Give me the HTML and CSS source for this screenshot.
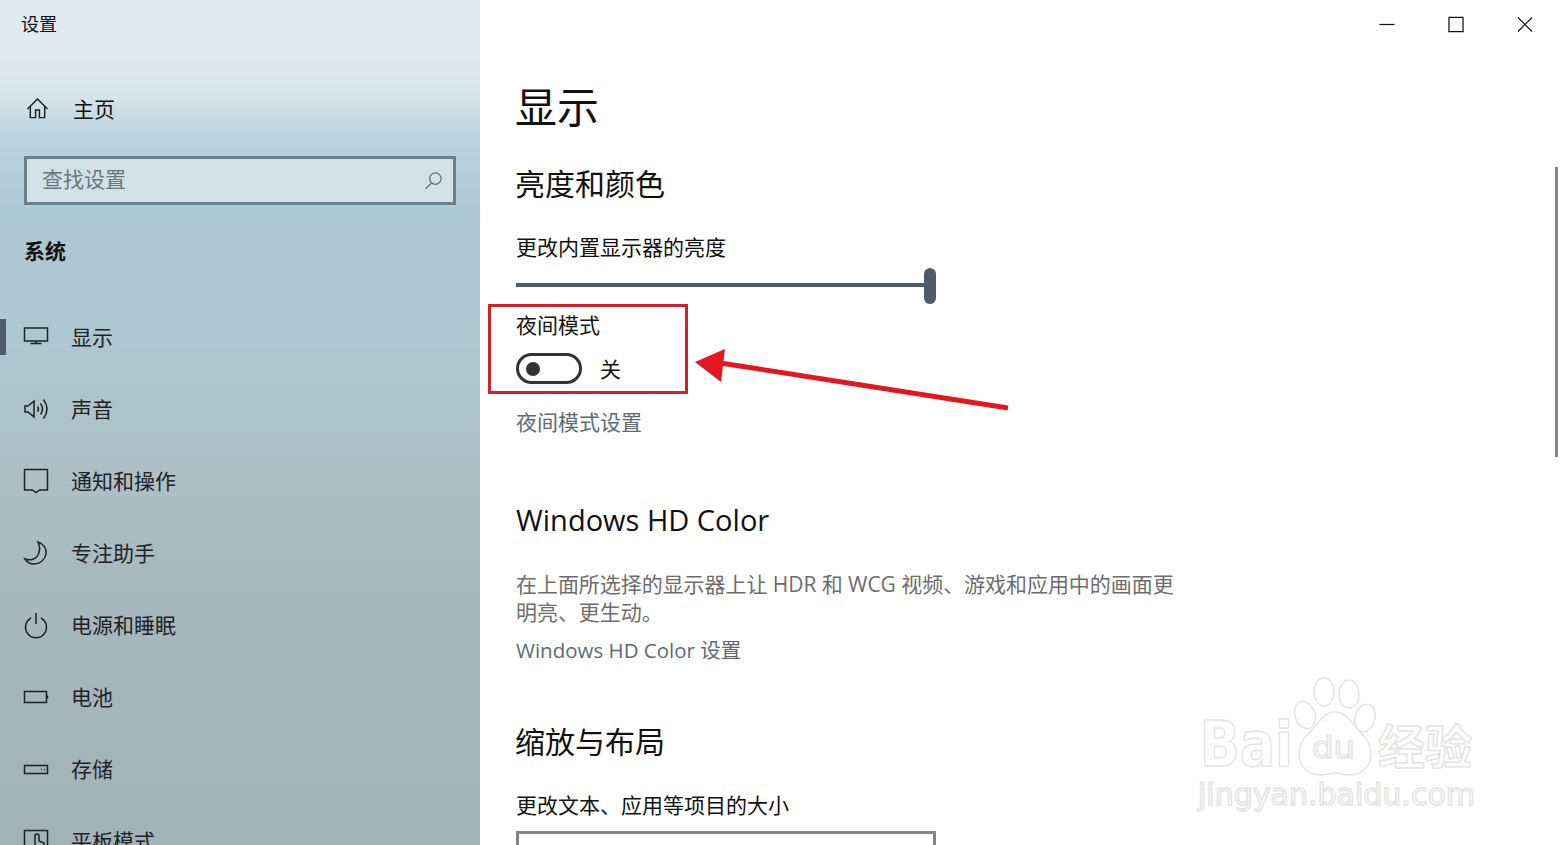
FILE: index.html
```html
<!DOCTYPE html>
<html lang="zh-CN">
<head>
    <meta charset="UTF-8">
    <title>设置</title>
    <link rel="stylesheet" href="styles.css">
</head>
<body>
    <div class="window">
        <aside class="sidebar">
            <div class="app-title">设置</div>
            <div class="home-row">
                <svg class="icon" viewBox="0 0 24 24"><path d="M1.500 12.500 12 2l10.500 10.500M4.500 10v11.500h5.500v-8h4v8h5.500V10"/></svg>
                <span>主页</span>
            </div>
            <div class="search-box">
                <span>查找设置</span>
                <svg class="search-icon" viewBox="0 0 20 20"><circle cx="12" cy="8" r="6"/><path d="M8 12.500 1.500 19"/></svg>
            </div>
            <div class="group-title">系统</div>
            <nav class="nav">
                <div class="nav-item active">
                    <svg class="icon" viewBox="0 0 24 24"><path d="M.5 3h23v13H.5zM12 16v2.500M6.500 18.500h11"/></svg>
                    <span>显示</span>
                </div>
                <div class="nav-item">
                    <svg class="icon" viewBox="0 0 24 24"><path d="M1 9v6h3l6 5V4L4 9zM13.500 9.500q2 2.500 0 5M16.500 6.500q4 5.500 0 11M19.500 2.500q7 9.500 0 19"/></svg>
                    <span>声音</span>
                </div>
                <div class="nav-item">
                    <svg class="icon" viewBox="0 0 24 24"><path d="M.5 .5h23v20.500h-8L12 23.500 8.500 21h-8z"/></svg>
                    <span>通知和操作</span>
                </div>
                <div class="nav-item">
                    <svg class="icon" viewBox="0 0 24 24"><path d="M14 1c6 2 9 7 8 12-1 6-6 10-12 10-4 0-7-2-9-5 6 2 11 0 13-4 2-4 2-9 0-13z"/></svg>
                    <span>专注助手</span>
                </div>
                <div class="nav-item">
                    <svg class="icon" viewBox="0 0 24 24"><path d="M7 5a10.500 10.500 0 1 0 10 0M12 0v11"/></svg>
                    <span>电源和睡眠</span>
                </div>
                <div class="nav-item">
                    <svg class="icon" viewBox="0 0 24 24"><path d="M.5 6.500h22v11H.5zM23.500 10.500v3"/></svg>
                    <span>电池</span>
                </div>
                <div class="nav-item">
                    <svg class="icon" viewBox="0 0 24 24"><path d="M.5 8.500h23v8H.5zM17 12.500h1M20 12.500h1"/></svg>
                    <span>存储</span>
                </div>
                <div class="nav-item">
                    <svg class="icon" viewBox="0 0 24 24"><path d="M.5 23V1.500h23V23M8 23v-6l3 2V7q0-2 2-2t2 2v5l5 2v9"/></svg>
                    <span>平板模式</span>
                </div>
            </nav>
        </aside>

        <main class="content">
            <div class="window-controls">
                <svg viewBox="0 0 16 16"><path d="M0 8h16"/></svg>
                <svg viewBox="0 0 16 16"><path d="M.5.500h15v15H.5z"/></svg>
                <svg viewBox="0 0 16 16"><path d="m.5.500 15 15M15.500.500l-15 15"/></svg>
            </div>

            <h1 class="page-title">显示</h1>
            <h2 class="section-title first">亮度和颜色</h2>
            <div class="label brightness-label">更改内置显示器的亮度</div>
            <div class="slider"><div class="slider-track"></div><div class="slider-thumb"></div></div>
            <div class="label night-label">夜间模式</div>
            <div class="toggle-row">
                <div class="toggle"><div class="toggle-dot"></div></div>
                <span>关</span>
            </div>
            <div class="link night-link">夜间模式设置</div>

            <h2 class="section-title hd-title">Windows HD Color</h2>
            <p class="desc">在上面所选择的显示器上让 HDR 和 WCG 视频、游戏和应用中的画面更明亮、更生动。</p>
            <div class="link hd-link">Windows HD Color 设置</div>

            <h2 class="section-title scale-title">缩放与布局</h2>
            <div class="label scale-label">更改文本、应用等项目的大小</div>
            <div class="select-box"></div>
        </main>

        <div class="scrollbar"></div>
        <div class="mark-box"></div>
        <svg class="mark-arrow" viewBox="0 0 340 70">
            <path class="arrow-line" d="M24 17 318 63"/>
            <path class="arrow-head" d="M5 17 35 4 31 37z"/>
        </svg>
        <svg class="watermark" viewBox="0 0 300 150">
            <ellipse cx="115" cy="45" rx="10" ry="14" transform="rotate(-20 115 45)"/>
            <ellipse cx="134" cy="22" rx="10" ry="14"/>
            <ellipse cx="159" cy="24" rx="10" ry="14"/>
            <ellipse cx="175" cy="48" rx="10" ry="14" transform="rotate(15 175 48)"/>
            <path d="M145 42c-12 0-17 12-25 20-6 6-11 12-11 22 0 13 10 21 22 21 6 0 9-2 14-2s8 2 14 2c12 0 22-8 22-21 0-10-5-16-11-22-8-8-13-20-25-20z"/>
            <text class="wm-bold" x="10" y="96" font-size="62" textLength="93" lengthAdjust="spacingAndGlyphs">Bai</text>
            <text x="122" y="88" font-size="30" textLength="43" lengthAdjust="spacingAndGlyphs">du</text>
            <text class="wm-cjk" x="188" y="94" font-size="47">经验</text>
            <text x="8" y="135" font-size="30" textLength="277" lengthAdjust="spacingAndGlyphs">jingyan.baidu.com</text>
        </svg>
    </div>
</body>
</html>
```

FILE: styles.css
```css
html, body {
    margin: 0;
    height: 100%;
    overflow: hidden;
}
body {
    font-family: "Noto Sans CJK SC", "Open Sans", sans-serif;
    background: white;
    color: #111;
}
.window {
    position: relative;
    display: flex;
    height: 845px;
    overflow: hidden;
}

/* sidebar */
.sidebar {
    width: 480px;
    flex: none;
    overflow: hidden;
    background: linear-gradient(180deg, #e0ebf1 0, #dfeaf0 60px, #d6e4ea 95px, #bdd4de 135px, #adc9d3 210px, #adc8d1 320px, #aebfc6 470px, #a6b8bd 600px, #a2b3b8 845px);
}
.app-title {
    height: 48px;
    padding-left: 21px;
    font-size: 18px;
    line-height: 46px;
}
.home-row {
    display: flex;
    align-items: center;
    gap: 24px;
    height: 42px;
    margin-top: 39px;
    padding-left: 26px;
    font-size: 21px;
}
.home-row .icon {
    width: 23px;
    height: 23px;
    margin-top: 0;
}
.icon {
    width: 24px;
    height: 24px;
    margin-top: 2px;
    flex: none;
    fill: none;
    stroke: #1c2226;
    stroke-width: 1.500;
    overflow: visible;
}
.search-box {
    display: flex;
    align-items: center;
    justify-content: space-between;
    box-sizing: border-box;
    width: 432px;
    height: 49px;
    margin: 27px 0 0 24px;
    padding: 0 10px 0 15px;
    border: 3px solid #6b7f88;
    background: #d2e1e7;
    color: #66777f;
    font-size: 21px;
}
.search-box span {
    margin-bottom: 5px;
}
.search-icon {
    width: 19px;
    height: 19px;
    fill: none;
    stroke: #5d6d75;
    stroke-width: 1.300;
}
.group-title {
    margin: 27px 0 0 24px;
    height: 36px;
    font-size: 21px;
    font-weight: 700;
    line-height: 36px;
}
.nav {
    margin-top: 32px;
}
.nav-item {
    position: relative;
    display: flex;
    align-items: center;
    gap: 23px;
    height: 72px;
    padding-left: 24px;
    font-size: 21px;
    color: #1d2327;
}
.nav-item.active::before {
    content: "";
    position: absolute;
    left: 0;
    top: 19px;
    width: 6px;
    height: 36px;
    background: #4f5c69;
}

/* main pane */
.content {
    position: relative;
    flex: 1;
    padding: 75px 0 0 36px;
}
.window-controls {
    position: absolute;
    top: 17px;
    right: 28px;
    display: flex;
    gap: 53px;
}
.window-controls svg {
    width: 16px;
    height: 15px;
    fill: none;
    stroke: #111;
    stroke-width: 1.300;
    overflow: visible;
}
.page-title {
    margin: 0 0 0 -1px;
    font-size: 42px;
    font-weight: 400;
    line-height: 60px;
}
.section-title {
    margin: 0 0 0 -1px;
    font-size: 30px;
    font-weight: 400;
    line-height: 40px;
}
.section-title.first { margin-top: 27px; }
.hd-title {
    margin: 64px 0 0;
    font-family: "Open Sans", sans-serif;
    font-size: 29px;
}
.scale-title { margin-top: 55px; }
.label {
    font-size: 21px;
    line-height: 30px;
}
.brightness-label { margin-top: 29px; }
.night-label { margin-top: 6px; }
.scale-label { margin-top: 29px; }
.slider {
    position: relative;
    width: 420px;
    height: 36px;
    margin-top: 6px;
}
.slider-track {
    position: absolute;
    left: 0;
    right: 6px;
    top: 16px;
    height: 4px;
    background: #4f5b67;
}
.slider-thumb {
    position: absolute;
    right: 0;
    top: 1px;
    width: 12px;
    height: 36px;
    border-radius: 6px;
    background: #4f5b67;
}
.toggle-row {
    display: flex;
    align-items: center;
    gap: 18px;
    margin-top: 14px;
    height: 31px;
    font-size: 21px;
}
.toggle-row span {
    margin-bottom: 2px;
}
.toggle {
    display: flex;
    align-items: center;
    box-sizing: border-box;
    width: 66px;
    height: 31px;
    padding-left: 7px;
    border: 3px solid #333;
    border-radius: 16px;
}
.toggle-dot {
    width: 14px;
    height: 14px;
    border-radius: 50%;
    background: #333;
}
.link {
    color: #5d6a72;
    font-size: 21px;
    line-height: 30px;
}
.night-link { margin-top: 22px; }
.hd-link {
    margin-top: 9px;
    font-family: "Open Sans", "Noto Sans CJK SC", sans-serif;
    font-size: 20.500px;
}
.desc {
    width: 664px;
    margin: 30px 0 0;
    color: #6d6d6d;
    font-family: "Open Sans", "Noto Sans CJK SC", sans-serif;
    font-size: 21px;
    letter-spacing: -0.05px;
    line-height: 28px;
}
.select-box {
    box-sizing: border-box;
    width: 420px;
    height: 40px;
    margin-top: 12px;
    border: 3px solid #858585;
}

/* things lying over the page */
.scrollbar {
    position: absolute;
    left: 1555px;
    top: 167px;
    width: 3px;
    height: 290px;
    background: #858585;
}
.mark-box {
    position: absolute;
    left: 488px;
    top: 304px;
    box-sizing: border-box;
    width: 200px;
    height: 90px;
    border: 3px solid #d3212b;
}
.mark-arrow {
    position: absolute;
    left: 690px;
    top: 345px;
    width: 340px;
    height: 70px;
}
.arrow-line {
    stroke: #e5161f;
    stroke-width: 5;
}
.arrow-head {
    fill: #e5161f;
}
.watermark {
    position: absolute;
    left: 1190px;
    top: 670px;
    width: 300px;
    height: 150px;
    fill: #fff;
    stroke: #e4e4e4;
    stroke-width: 1.500;
    font-family: "DejaVu Sans", sans-serif;
}
.wm-bold {
    font-weight: 700;
}
.wm-cjk {
    font-family: "Noto Sans CJK SC", sans-serif;
    font-weight: 700;
}
```
